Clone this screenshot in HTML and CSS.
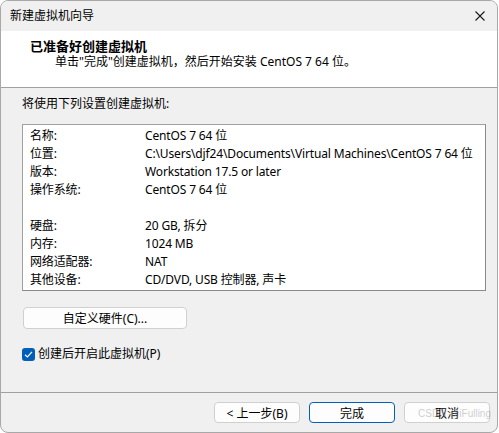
FILE: index.html
```html
<!DOCTYPE html>
<html lang="zh-CN">
<head>
    <meta charset="UTF-8">
    <title>新建虚拟机向导</title>
    <link rel="stylesheet" href="styles.css">
</head>
<body>

    <div class="window">
        <div class="titlebar">
            <span class="title">新建虚拟机向导</span>
            <svg class="close" width="10" height="10" viewBox="0 0 10 10">
                <path d="M0.5 0.5 L9.5 9.5 M9.5 0.5 L0.5 9.5" stroke="#1a1a1a" stroke-width="1.1" fill="none"/>
            </svg>
        </div>

        <div class="header">
            <h1>已准备好创建虚拟机</h1>
            <p>单击"完成"创建虚拟机，然后开始安装 CentOS 7 64 位。</p>
        </div>

        <div class="content">
            <p class="intro">将使用下列设置创建虚拟机:</p>

            <div class="summary">
                <div class="row"><span class="label">名称:</span><span>CentOS 7 64 位</span></div>
                <div class="row"><span class="label">位置:</span><span>C:\Users\djf24\Documents\Virtual Machines\CentOS 7 64 位</span></div>
                <div class="row"><span class="label">版本:</span><span>Workstation 17.5 or later</span></div>
                <div class="row"><span class="label">操作系统:</span><span>CentOS 7 64 位</span></div>
                <div class="row"></div>
                <div class="row"><span class="label">硬盘:</span><span>20 GB, 拆分</span></div>
                <div class="row"><span class="label">内存:</span><span>1024 MB</span></div>
                <div class="row"><span class="label">网络适配器:</span><span>NAT</span></div>
                <div class="row"><span class="label">其他设备:</span><span>CD/DVD, USB 控制器, 声卡</span></div>
            </div>

            <button class="btn hw-btn">自定义硬件(C)...</button>

            <label class="check">
                <span class="box">
                    <svg width="9" height="9" viewBox="0 0 9 9">
                        <path d="M1 4.8 L3.4 7 L8 1.8" stroke="white" stroke-width="1.2" fill="none"/>
                    </svg>
                </span>
                创建后开启此虚拟机(P)
            </label>
        </div>

        <div class="footer">
            <button class="btn">&lt; 上一步(B)</button>
            <button class="btn default">完成</button>
            <button class="btn">取消</button>
        </div>

        <span class="watermark">CSDN @iFulling</span>
    </div>

</body>
</html>
```

FILE: styles.css
```css
* {
    padding: 0;
    margin: 0;
    box-sizing: border-box;
}

body {
    background-color: #ffffff;
    font-family: "Noto Sans", "Noto Sans CJK SC", sans-serif;
    font-size: 12px;
    color: #000;
}

.window {
    position: relative;
    width: 498px;
    height: 433px;
    border: 1px solid #a8a8a8;
    border-radius: 8px;
    background-color: #f0f0f0;
    overflow: hidden;
    display: flex;
    flex-direction: column;
}

.titlebar {
    height: 30px;
    display: flex;
    align-items: center;
    justify-content: space-between;
    padding: 0 12px 0 9px;
    background-color: #f0f0f0;
}

.title {
    font-size: 12px;
    line-height: 18px;
}

.header {
    height: 57px;
    background-color: #ffffff;
    border-bottom: 1px solid #a0a0a0;
    padding: 8px 0 0 29px;
}

.header h1 {
    font-size: 13px;
    font-weight: bold;
    line-height: 15px;
}

.header p {
    line-height: 16px;
    padding-left: 25px;
}

.content {
    flex: 1;
    padding: 7px 11px 0 21px;
}

.intro {
    line-height: 18px;
}

.summary {
    margin-top: 11px;
    background-color: #ffffff;
    border: 1px solid #8a8a8a;
    border-top-color: #a0a0a0;
    border-left-color: #a0a0a0;
    padding: 2px 0 1px 7px;
    letter-spacing: -0.15px;
}

.row {
    display: flex;
    height: 18px;
    line-height: 18px;
    white-space: nowrap;
}

.label {
    width: 115px;
    flex-shrink: 0;
}

.btn {
    height: 22px;
    width: 86px;
    background-color: #fdfdfd;
    border: 1px solid #d0d0d0;
    border-radius: 4px;
    font-family: inherit;
    font-size: 12px;
    color: #000;
}

.hw-btn {
    display: block;
    width: 164px;
    margin: 16px 0 0 1px;
}

.check {
    display: flex;
    align-items: center;
    gap: 3px;
    margin-top: 18px;
    line-height: 14px;
}

.box {
    width: 13px;
    height: 13px;
    border-radius: 3px;
    background-color: #005fb8;
    display: flex;
    align-items: center;
    justify-content: center;
}

.footer {
    height: 40px;
    border-top: 1px solid #a0a0a0;
    display: flex;
    justify-content: flex-end;
    gap: 9px;
    padding: 9px 7px 0 0;
}

.footer .btn {
    height: 21px;
}

.default {
    border-color: #005fb8;
}

.watermark {
    position: absolute;
    right: 6px;
    bottom: 13px;
    font-size: 10px;
    color: rgba(160, 160, 160, 0.5);
    font-family: "Liberation Sans", sans-serif;
}
```
